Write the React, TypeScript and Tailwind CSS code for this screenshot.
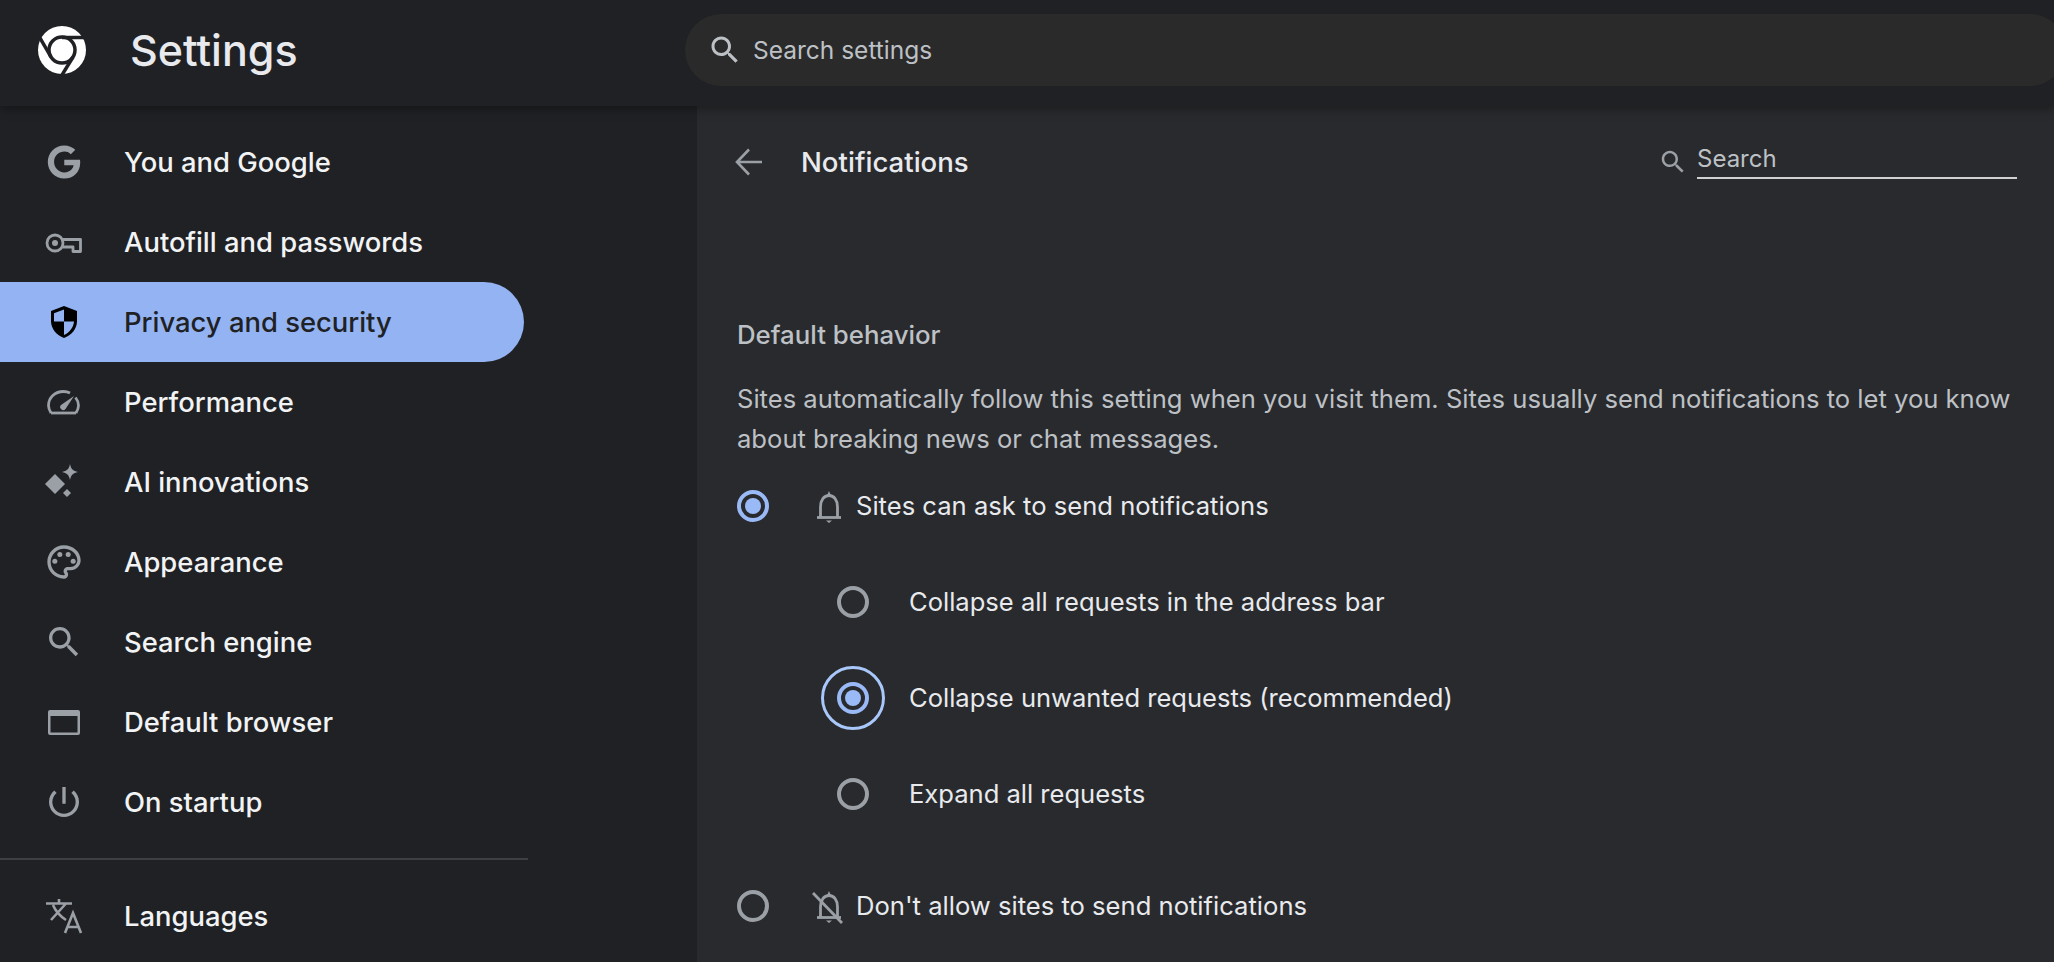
import { MdOutlinePalette } from "react-icons/md";
import { FaGoogle } from "react-icons/fa";

const searchPath =
  "M15.5 14h-.79l-.28-.27C15.41 12.59 16 11.11 16 9.5 16 5.91 13.09 3 9.5 3S3 5.91 3 9.5 5.91 16 9.5 16c1.61 0 3.09-.59 4.23-1.57l.27.28v.79l5 4.99L20.49 19l-4.99-5zm-6 0C7.01 14 5 11.99 5 9.5S7.01 5 9.5 5 14 7.01 14 9.5 11.99 14 9.5 14z";

const Ic = ({ d, className = "w-10 h-10" }: { d: string; className?: string }) => (
  <svg viewBox="0 0 24 24" className={className} fill="currentColor">
    <path d={d} />
  </svg>
);

const ChromeLogo = () => (
  <svg viewBox="0 0 48 48" className="w-12 h-12 shrink-0">
    <circle cx="24" cy="24" r="24" fill="#fff" />
    <circle cx="24" cy="24" r="13" fill="none" stroke="#202124" strokeWidth="3.5" />
    <path d="M24 11.5 H47" stroke="#202124" strokeWidth="3.5" />
    <path d="M13 31 L1.5 11" stroke="#202124" strokeWidth="3.5" />
    <path d="M35 31 L24 49" stroke="#202124" strokeWidth="3.5" />
  </svg>
);

const icons: Record<string, React.ReactNode> = {
  google: (
    <span className="flex items-center justify-center w-10 h-10">
      <FaGoogle className="w-[34px] h-[34px]" />
    </span>
  ),
  key: (
    <svg viewBox="0 0 40 40" className="w-10 h-10" fill="none" stroke="currentColor" strokeWidth="2.8">
      <circle cx="11" cy="21" r="8" />
      <path d="M18.5 17.5 H36.5 V29.5 H29 V25 H18.5" strokeLinejoin="round" />
      <circle cx="11" cy="21" r="3" fill="currentColor" stroke="none" />
    </svg>
  ),
  shield: (
    <svg viewBox="0 0 40 40" className="w-10 h-10">
      <path d="M20 4 L33 9 V19 C33 27 27.5 33 20 36 C12.5 33 7 27 7 19 V9 Z" fill="#000" />
      <path d="M20 7.5 L10 11.2 V19.5 H20 Z" fill="#93b3f3" />
      <path d="M20 19.5 H30 C29.5 25.5 25.5 30.5 20 33 Z" fill="#93b3f3" />
    </svg>
  ),
  gauge: (
    <svg viewBox="0 0 40 40" className="w-10 h-10" fill="none" stroke="currentColor" strokeWidth="2.8">
      <path d="M7 31 C5.5 28.5 4.5 26 4.5 23.5 C4.5 15.5 11 9.5 19.5 9.5 C22 9.5 24 10 26 11" />
      <path d="M31.5 15.5 C33.5 18 34.5 20.5 34.5 23.5 C34.5 26 33.5 28.5 32 31" />
      <path d="M7 31 H32" />
      <path d="M30 14 L21.5 27 A3 3 0 0 1 17 23 Z" fill="currentColor" stroke="none" />
    </svg>
  ),
  sparkle: (
    <svg viewBox="0 0 40 40" className="w-10 h-10" fill="currentColor">
      <path d="M11 12 L21 22 L11 32 L1 22 Z" />
      <path d="M26 2 C27 7 29 9 34 10 C29 11 27 13 26 18 C25 13 23 11 18 10 C23 9 25 7 26 2 Z" />
      <path d="M23 27 L27 31 L23 35 L19 31 Z" />
    </svg>
  ),
  palette: <MdOutlinePalette className="w-10 h-10" />,
  search: <Ic d={searchPath} />,
  browser: (
    <svg viewBox="0 0 40 40" className="w-10 h-10" fill="currentColor">
      <path fillRule="evenodd" d="M6 8 H34 A2 2 0 0 1 36 10 V31 A2 2 0 0 1 34 33 H6 A2 2 0 0 1 4 31 V10 A2 2 0 0 1 6 8 Z M6.5 14 V30.5 H33.5 V14 Z" />
    </svg>
  ),
  power: <Ic d="M13 3h-2v10h2V3zm4.83 2.17l-1.42 1.42C17.99 7.86 19 9.81 19 12c0 3.87-3.13 7-7 7s-7-3.13-7-7c0-2.19 1.01-4.14 2.58-5.42L6.17 5.17C4.23 6.82 3 9.26 3 12c0 4.97 4.03 9 9 9s9-4.03 9-9c0-2.74-1.23-5.18-3.17-6.83z" />,
  translate: (
    <svg viewBox="0 0 40 40" className="w-10 h-10" fill="none" stroke="currentColor" strokeWidth="2.6">
      <path d="M2 7.5 H28 M15 3 V7.5 M7 24 L22 7.5 M9 9 C11 14 16 20 22 24" />
      <path d="M21 37 L29 17 L37 37 M24 31 H34" />
    </svg>
  ),
};

const NavItem = ({ icon, label, active }: { icon: string; label: string; active?: boolean }) => (
  <div
    className={`flex items-center h-20 w-[524px] pl-11 rounded-r-[40px] ${
      active ? "bg-[#93b3f3] text-[#202124]" : "text-[#f1f3f4]"
    }`}
  >
    <span className={active ? "w-10 h-10 shrink-0" : "w-10 h-10 shrink-0 text-[#9aa0a6]"}>{icons[icon]}</span>
    <span className="ml-10 mt-[2px] text-[27.4px] font-medium">{label}</span>
  </div>
);

const Radio = ({ on }: { on?: boolean }) => (
  <span
    className={`flex items-center justify-center w-8 h-8 rounded-full border-[4px] shrink-0 ${
      on ? "border-[#9ab9f7]" : "border-[#9aa0a6]"
    }`}
  >
    {on && <span className="w-4 h-4 rounded-full bg-[#9ab9f7]" />}
  </span>
);

const BellIcon = ({ off }: { off?: boolean }) => (
  <svg viewBox="0 0 40 40" className="w-10 h-10 text-[#9aa0a6] shrink-0" fill="none" stroke="currentColor" strokeWidth="2.8">
    <path d="M11.5 31 V21 C11.5 14 15 9.5 20 9.5 C25 9.5 28.5 14 28.5 21 V31" />
    <path d="M8 31.5 H32" />
    <path d="M18 9.5 L20 5 L22 9.5 Z" fill="currentColor" stroke="none" />
    <path d="M17 34.5 H23 L20 37 Z" fill="currentColor" stroke="none" />
    {off && <path d="M4 7 L33 37" />}
  </svg>
);

const SubOption = ({ label, on }: { label: string; on?: boolean }) => (
  <div className="flex items-center h-24 pl-[100px]">
    <span className="relative flex">
      <Radio on={on} />
      {on && <span className="absolute -inset-4 rounded-full border-[3px] border-[#a8c7fa]" />}
    </span>
    <span className="ml-10 mt-[1px] text-[25.55px] text-[#e8eaed]">{label}</span>
  </div>
);

export default function App() {
  return (
    <div className="h-screen overflow-hidden flex flex-col bg-[#292a2d] font-['Inter','Noto_Sans',sans-serif]">
      <header className="relative z-10 h-[106px] shrink-0 flex items-center pb-[6px] bg-[#202124] shadow-[0_3px_10px_rgba(0,0,0,0.35)]">
        <div className="w-[685px] shrink-0 flex items-center pl-[38px]">
          <ChromeLogo />
          <span className="ml-[44px] text-[43px] font-medium text-[#e8eaed]">Settings</span>
        </div>
        <div className="flex-1 h-[72px] -mr-3 flex items-center pl-[22px] rounded-[36px] bg-[#2a2a2a] text-[#bdc1c6]">
          <Ic d={searchPath} className="w-9 h-9" />
          <span className="ml-[10px] text-[24.5px] text-[#bdc1c6]">Search settings</span>
        </div>
      </header>

      <div className="flex-1 flex min-h-0">
        <aside className="w-[697px] shrink-0 pt-4 bg-[#202124]">
          <NavItem icon="google" label="You and Google" />
          <NavItem icon="key" label="Autofill and passwords" />
          <NavItem icon="shield" label="Privacy and security" active />
          <NavItem icon="gauge" label="Performance" />
          <NavItem icon="sparkle" label="AI innovations" />
          <NavItem icon="palette" label="Appearance" />
          <NavItem icon="search" label="Search engine" />
          <NavItem icon="browser" label="Default browser" />
          <NavItem icon="power" label="On startup" />
          <div className="w-[528px] h-[2px] my-4 bg-[#3c4043]" />
          <NavItem icon="translate" label="Languages" />
        </aside>

        <main className="flex-1 min-w-0 pl-10 pr-[37px]">
          <div className="flex items-center h-20 mt-4">
            <svg viewBox="0 0 28 28" className="w-7 h-7 -ml-[2px] text-[#9aa0a6]" fill="none" stroke="currentColor" strokeWidth="2.6">
              <path d="M27 14 H2 M14 1.5 L2 14 L14 26.5" />
            </svg>
            <span className="ml-[38px] mt-[1px] text-[27.6px] font-medium text-[#e8eaed]">Notifications</span>
            <div className="ml-auto flex items-center">
              <Ic d={searchPath} className="w-[30px] h-[30px] text-[#9aa0a6]" />
              <div className="ml-[9px] w-80 h-[34px] border-b-2 border-[#d0d0d0] text-[24px] leading-[28px] text-[#bdc1c6]">Search</div>
            </div>
          </div>

          <div className="mt-[113px] text-[25.8px] font-medium leading-[40px] text-[#bdc1c6]">Default behavior</div>
          <p className="mt-[24px] text-[25.6px] leading-[40px] text-[#bdc1c6]">
            Sites automatically follow this setting when you visit them. Sites usually send notifications to let you know about breaking news or chat messages.
          </p>

          <div className="flex items-center h-12 mt-[23px]">
            <Radio on />
            <span className="ml-[40px] flex items-center">
              <BellIcon />
              <span className="ml-[7px] text-[25.6px] text-[#e8eaed]">Sites can ask to send notifications</span>
            </span>
          </div>
          <div className="mt-[24px]">
            <SubOption label="Collapse all requests in the address bar" />
            <SubOption label="Collapse unwanted requests (recommended)" on />
            <SubOption label="Expand all requests" />
          </div>
          <div className="flex items-center h-12 mt-[40px]">
            <Radio />
            <span className="ml-[40px] flex items-center">
              <BellIcon off />
              <span className="ml-[7px] text-[25.6px] text-[#e8eaed]">Don't allow sites to send notifications</span>
            </span>
          </div>
        </main>
      </div>
    </div>
  );
}
